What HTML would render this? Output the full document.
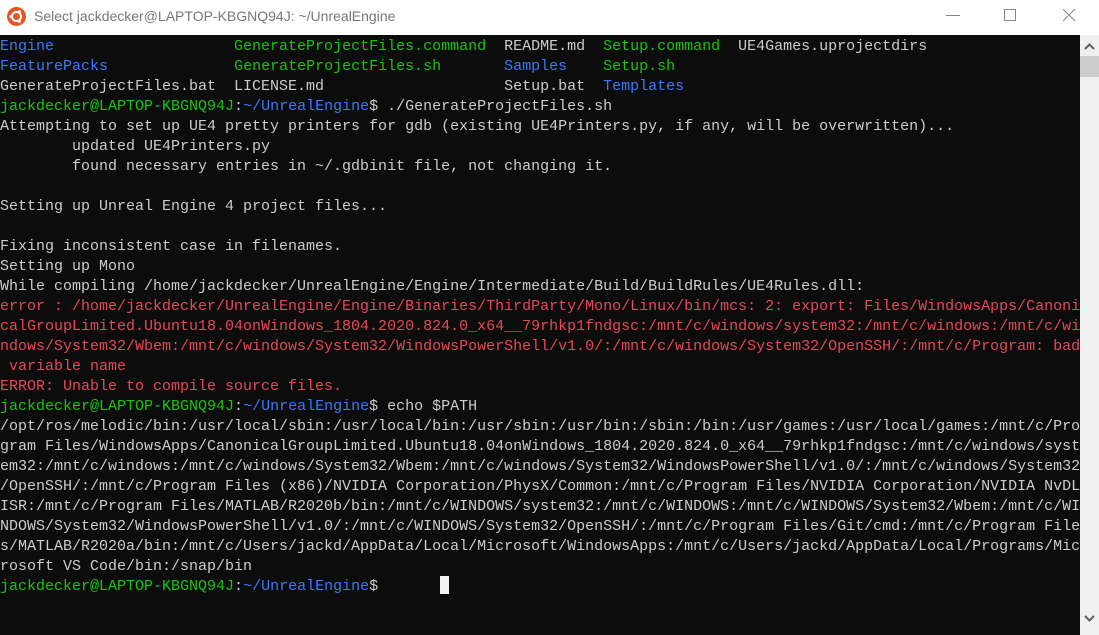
<!DOCTYPE html>
<html><head><meta charset="utf-8"><style>
*{margin:0;padding:0}
body{width:1099px;height:635px;overflow:hidden;background:#fff;font-family:"Liberation Sans",sans-serif;position:relative}
#title{position:absolute;left:0;top:0;width:1099px;height:35px;background:#fff}
#title .t{position:absolute;left:34px;top:8px;font-size:14px;color:#777}
#logo{position:absolute;left:7px;top:7px;width:19px;height:19px;border-radius:50%;background:#e95420}
#term{position:absolute;left:0;top:35px;width:1080px;height:600px;background:#0c0c0c}
pre{position:absolute;left:0;top:2px;font-family:"Liberation Mono",monospace;font-size:15px;line-height:20px;color:#cccccc;white-space:pre}
.b{color:#3b78ff}.g{color:#16c60c}.r{color:#e74856}
#sb{position:absolute;left:1080px;top:35px;width:19px;height:600px;background:#f0f0f0}
#thumb{position:absolute;left:0;top:21px;width:19px;height:21px;background:#cdcdcd}
#cur{position:absolute;left:440px;top:541px;width:9px;height:18px;background:#f2f2f2}
</style></head><body>
<div id="title"><div id="logo"><svg width="19" height="19" viewBox="0 0 19 19"><circle cx="9.5" cy="9.5" r="4.5" fill="none" stroke="#fff" stroke-width="2"/><circle cx="4" cy="9.5" r="1.6" fill="#fff"/><circle cx="12.3" cy="4.7" r="1.6" fill="#fff"/><circle cx="12.3" cy="14.3" r="1.6" fill="#fff"/></svg></div><div class="t">Select jackdecker@LAPTOP-KBGNQ94J: ~/UnrealEngine</div>
<svg style="position:absolute;left:946px;top:15px" width="14" height="2"><rect width="14" height="1" fill="#888"/></svg>
<svg style="position:absolute;left:1004px;top:9px" width="13" height="13"><rect x="0.5" y="0.5" width="11" height="11" fill="none" stroke="#888"/></svg>
<svg style="position:absolute;left:1063px;top:9px" width="13" height="13"><path d="M0 0L12 12M12 0L0 12" stroke="#888" stroke-width="1"/></svg>
</div>
<div id="term"><pre><span class="b">Engine</span>                    <span class="g">GenerateProjectFiles.command</span>  README.md  <span class="g">Setup.command</span>  UE4Games.uprojectdirs
<span class="b">FeaturePacks</span>              <span class="g">GenerateProjectFiles.sh</span>       <span class="b">Samples</span>    <span class="g">Setup.sh</span>
GenerateProjectFiles.bat  LICENSE.md                    Setup.bat  <span class="b">Templates</span>
<span class="g">jackdecker@LAPTOP-KBGNQ94J</span>:<span class="b">~/UnrealEngine</span>$ ./GenerateProjectFiles.sh
Attempting to set up UE4 pretty printers for gdb (existing UE4Printers.py, if any, will be overwritten)...
        updated UE4Printers.py
        found necessary entries in ~/.gdbinit file, not changing it.

Setting up Unreal Engine 4 project files...

Fixing inconsistent case in filenames.
Setting up Mono
While compiling /home/jackdecker/UnrealEngine/Engine/Intermediate/Build/BuildRules/UE4Rules.dll:
<span class="r">error : /home/jackdecker/UnrealEngine/Engine/Binaries/ThirdParty/Mono/Linux/bin/mcs: 2: export: Files/WindowsApps/Canoni
calGroupLimited.Ubuntu18.04onWindows_1804.2020.824.0_x64__79rhkp1fndgsc:/mnt/c/windows/system32:/mnt/c/windows:/mnt/c/wi
ndows/System32/Wbem:/mnt/c/windows/System32/WindowsPowerShell/v1.0/:/mnt/c/windows/System32/OpenSSH/:/mnt/c/Program: bad
 variable name
ERROR: Unable to compile source files.</span>
<span class="g">jackdecker@LAPTOP-KBGNQ94J</span>:<span class="b">~/UnrealEngine</span>$ echo $PATH
/opt/ros/melodic/bin:/usr/local/sbin:/usr/local/bin:/usr/sbin:/usr/bin:/sbin:/bin:/usr/games:/usr/local/games:/mnt/c/Pro
gram Files/WindowsApps/CanonicalGroupLimited.Ubuntu18.04onWindows_1804.2020.824.0_x64__79rhkp1fndgsc:/mnt/c/windows/syst
em32:/mnt/c/windows:/mnt/c/windows/System32/Wbem:/mnt/c/windows/System32/WindowsPowerShell/v1.0/:/mnt/c/windows/System32
/OpenSSH/:/mnt/c/Program Files (x86)/NVIDIA Corporation/PhysX/Common:/mnt/c/Program Files/NVIDIA Corporation/NVIDIA NvDL
ISR:/mnt/c/Program Files/MATLAB/R2020b/bin:/mnt/c/WINDOWS/system32:/mnt/c/WINDOWS:/mnt/c/WINDOWS/System32/Wbem:/mnt/c/WI
NDOWS/System32/WindowsPowerShell/v1.0/:/mnt/c/WINDOWS/System32/OpenSSH/:/mnt/c/Program Files/Git/cmd:/mnt/c/Program File
s/MATLAB/R2020a/bin:/mnt/c/Users/jackd/AppData/Local/Microsoft/WindowsApps:/mnt/c/Users/jackd/AppData/Local/Programs/Mic
rosoft VS Code/bin:/snap/bin
<span class="g">jackdecker@LAPTOP-KBGNQ94J</span>:<span class="b">~/UnrealEngine</span>$</pre><div id="cur"></div></div>
<div id="sb"><div id="thumb"></div>
<svg style="position:absolute;left:4px;top:8px" width="11" height="7"><path d="M1 6L5.5 1.5L10 6" fill="none" stroke="#606060" stroke-width="2"/></svg>
<svg style="position:absolute;left:4px;top:580px" width="11" height="7"><path d="M1 1L5.5 5.5L10 1" fill="none" stroke="#606060" stroke-width="2"/></svg>
</div>
</body></html>
